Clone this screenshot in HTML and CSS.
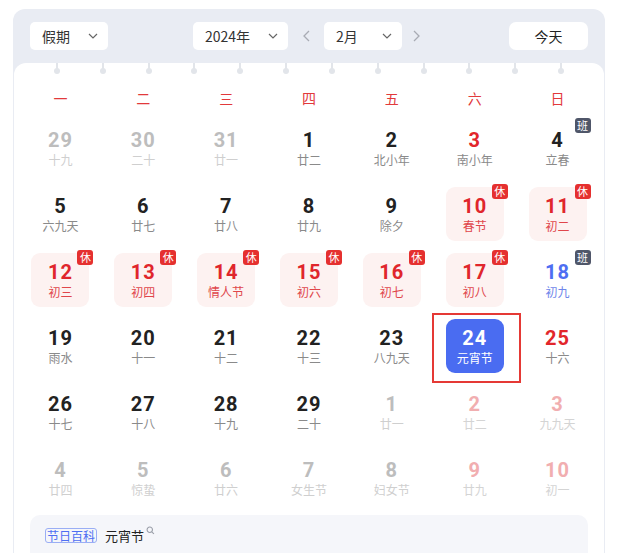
FILE: index.html
```html
<!DOCTYPE html>
<html lang="zh-CN">
<head>
<meta charset="utf-8">
<title>万年历</title>
<link rel="stylesheet" href="styles.css">
</head>
<body>
<div class="card">
  <div class="toolbar">
    <div class="select sel-holiday"><span>假期</span><svg class="chev" viewBox="0 0 10 6"><path d="M1 1L5 5L9 1"/></svg></div>
    <div class="center">
      <div class="select sel-year"><span>2024年</span><svg class="chev" viewBox="0 0 10 6"><path d="M1 1L5 5L9 1"/></svg></div>
      <svg class="arrow prev" viewBox="0 0 7 12"><path d="M6 1L1 6L6 11"/></svg>
      <div class="select sel-month"><span>2月</span><svg class="chev" viewBox="0 0 10 6"><path d="M1 1L5 5L9 1"/></svg></div>
      <svg class="arrow next" viewBox="0 0 7 12"><path d="M1 1L6 6L1 11"/></svg>
    </div>
    <div class="today">今天</div>
  </div>
  <div class="panel">
    <div class="rings">
      <i></i><i></i><i></i><i></i><i></i><i></i><i></i><i></i><i></i><i></i><i></i><i></i>
    </div>
    <div class="weekdays">
      <span>一</span><span>二</span><span>三</span><span>四</span><span>五</span><span>六</span><span>日</span>
    </div>
    <div class="grid">
      <div class="cell other"><div class="box"><b>29</b><small>十九</small></div></div>
      <div class="cell other"><div class="box"><b>30</b><small>二十</small></div></div>
      <div class="cell other"><div class="box"><b>31</b><small>廿一</small></div></div>
      <div class="cell"><div class="box"><b>1</b><small>廿二</small></div></div>
      <div class="cell"><div class="box"><b>2</b><small>北小年</small></div></div>
      <div class="cell weekend"><div class="box"><b>3</b><small>南小年</small></div></div>
      <div class="cell"><div class="box"><b>4</b><small>立春</small><em class="badge work">班</em></div></div>

      <div class="cell"><div class="box"><b>5</b><small>六九天</small></div></div>
      <div class="cell"><div class="box"><b>6</b><small>廿七</small></div></div>
      <div class="cell"><div class="box"><b>7</b><small>廿八</small></div></div>
      <div class="cell"><div class="box"><b>8</b><small>廿九</small></div></div>
      <div class="cell"><div class="box"><b>9</b><small>除夕</small></div></div>
      <div class="cell rest"><div class="box"><b>10</b><small>春节</small><em class="badge off">休</em></div></div>
      <div class="cell rest"><div class="box"><b>11</b><small>初二</small><em class="badge off">休</em></div></div>

      <div class="cell rest"><div class="box"><b>12</b><small>初三</small><em class="badge off">休</em></div></div>
      <div class="cell rest"><div class="box"><b>13</b><small>初四</small><em class="badge off">休</em></div></div>
      <div class="cell rest"><div class="box"><b>14</b><small>情人节</small><em class="badge off">休</em></div></div>
      <div class="cell rest"><div class="box"><b>15</b><small>初六</small><em class="badge off">休</em></div></div>
      <div class="cell rest"><div class="box"><b>16</b><small>初七</small><em class="badge off">休</em></div></div>
      <div class="cell rest"><div class="box"><b>17</b><small>初八</small><em class="badge off">休</em></div></div>
      <div class="cell workday"><div class="box"><b>18</b><small>初九</small><em class="badge work">班</em></div></div>

      <div class="cell"><div class="box"><b>19</b><small>雨水</small></div></div>
      <div class="cell"><div class="box"><b>20</b><small>十一</small></div></div>
      <div class="cell"><div class="box"><b>21</b><small>十二</small></div></div>
      <div class="cell"><div class="box"><b>22</b><small>十三</small></div></div>
      <div class="cell"><div class="box"><b>23</b><small>八九天</small></div></div>
      <div class="cell selected"><div class="box"><b>24</b><small>元宵节</small></div><span class="mark"></span></div>
      <div class="cell weekend"><div class="box"><b>25</b><small>十六</small></div></div>

      <div class="cell"><div class="box"><b>26</b><small>十七</small></div></div>
      <div class="cell"><div class="box"><b>27</b><small>十八</small></div></div>
      <div class="cell"><div class="box"><b>28</b><small>十九</small></div></div>
      <div class="cell"><div class="box"><b>29</b><small>二十</small></div></div>
      <div class="cell other"><div class="box"><b>1</b><small>廿一</small></div></div>
      <div class="cell other-red"><div class="box"><b>2</b><small>廿二</small></div></div>
      <div class="cell other-red"><div class="box"><b>3</b><small>九九天</small></div></div>

      <div class="cell other"><div class="box"><b>4</b><small>廿四</small></div></div>
      <div class="cell other"><div class="box"><b>5</b><small>惊蛰</small></div></div>
      <div class="cell other"><div class="box"><b>6</b><small>廿六</small></div></div>
      <div class="cell other"><div class="box"><b>7</b><small>女生节</small></div></div>
      <div class="cell other"><div class="box"><b>8</b><small>妇女节</small></div></div>
      <div class="cell other-red"><div class="box"><b>9</b><small>廿九</small></div></div>
      <div class="cell other-red"><div class="box"><b>10</b><small>初一</small></div></div>
    </div>
    <div class="info">
      <span class="tag">节日百科</span>
      <span class="fest">元宵节</span>
      <svg class="search" viewBox="0 0 10 10"><circle cx="4.2" cy="4.2" r="3"/><path d="M6.4 6.4L8.8 8.8"/></svg>
    </div>
  </div>
</div>
</body>
</html>
```

FILE: styles.css
```css
* { box-sizing: border-box; }
body {
  margin: 0;
  background: #fff;
  font-family: "Noto Sans CJK SC", "Noto Sans", sans-serif;
  overflow: hidden;
}
.card {
  margin: 9px 0 0 13px;
  width: 592px;
  background: #e9ecf3;
  border-radius: 12px 12px 0 0;
  padding: 0 1px;
}
.toolbar {
  height: 54px;
  padding: 13px 16px 0 16px;
  display: flex;
  justify-content: space-between;
  align-items: flex-start;
}
.select {
  height: 28px;
  background: #fff;
  border-radius: 5px;
  display: flex;
  align-items: center;
  justify-content: space-between;
  padding: 0 10px 0 12px;
  font-size: 14px;
  color: #333;
}
.sel-holiday { width: 78px; }
.sel-year { width: 95px; }
.sel-month { width: 78px; }
.chev {
  width: 10px;
  height: 6px;
  fill: none;
  stroke: #666;
  stroke-width: 1.2;
}
.center {
  display: flex;
  align-items: center;
}
.arrow {
  width: 7px;
  height: 12px;
  fill: none;
  stroke: #a8abb3;
  stroke-width: 1.3;
}
.arrow.prev { margin: 0 14px 0 15px; }
.arrow.next { margin: 0 4px 0 11px; }
.today {
  width: 79px;
  height: 28px;
  background: #fff;
  border-radius: 7px;
  font-size: 14px;
  color: #222;
  display: flex;
  align-items: center;
  justify-content: center;
}
.panel {
  background: #fff;
  border-radius: 12px 12px 0 0;
  padding: 0 5px;
  height: 490px;
}
.rings {
  height: 18px;
  display: flex;
  justify-content: space-between;
  padding: 0 35px;
}
.rings i {
  width: 6px;
  height: 11px;
}
.rings i::before {
  content: "";
  display: block;
  width: 2px;
  height: 6px;
  margin: 0 auto;
  background: #e2e5ea;
}
.rings i::after {
  content: "";
  display: block;
  width: 6px;
  height: 6px;
  margin-top: -1px;
  border-radius: 50%;
  background: #e2e5ea;
}
.weekdays {
  height: 34px;
  display: grid;
  grid-template-columns: repeat(7, 1fr);
  align-items: center;
  text-align: center;
  font-size: 14px;
  color: #e2393b;
}
.grid {
  display: grid;
  grid-template-columns: repeat(7, 1fr);
  grid-auto-rows: 66px;
}
.cell {
  position: relative;
  display: flex;
  align-items: center;
  justify-content: center;
}
.box {
  position: relative;
  width: 58px;
  height: 54px;
  border-radius: 9px;
  padding-top: 2px;
  display: flex;
  flex-direction: column;
  align-items: center;
  justify-content: center;
}
.box b {
  font-family: Roboto, "Liberation Sans", sans-serif;
  font-weight: 700;
  font-size: 20px;
  letter-spacing: 1px;
  line-height: 22px;
  color: #222;
}
.box small {
  font-size: 12px;
  line-height: 18px;
  color: #8a8a8a;
}
.cell.other b { color: #bdbdbd; }
.cell.other small { color: #cfcfcf; }
.cell.other-red b { color: #f1aeb0; }
.cell.other-red small { color: #d4d4d4; }
.cell.weekend b { color: #e2262b; }
.cell.rest .box { background: #fdf2f1; }
.cell.rest b { color: #e0262c; }
.cell.rest small { color: #e0464b; }
.cell.workday b { color: #4e6ef2; }
.cell.workday small { color: #6f86ea; }
.cell.selected .box { background: #4a6cf1; }
.cell.selected b, .cell.selected small { color: #fff; }
.badge {
  position: absolute;
  top: -3px;
  right: -4px;
  width: 16px;
  height: 15px;
  border-radius: 3px;
  font-style: normal;
  font-size: 11px;
  line-height: 15px;
  text-align: center;
  color: #fff;
}
.badge.off { background: #e5302f; }
.badge.work { background: #4f5669; }
.mark {
  position: absolute;
  left: -1px;
  top: 0;
  width: 89px;
  height: 70px;
  border: 2px solid #e53935;
}
.info {
  margin: 4px 11px 0 11px;
  height: 60px;
  background: #f5f6fa;
  border-radius: 10px;
  display: flex;
  align-items: flex-start;
  padding: 13px 0 0 15px;
}
.tag {
  font-size: 12px;
  line-height: 13px;
  color: #4e6ef2;
  border: 1px solid #9aaef5;
  border-radius: 3px;
  padding: 0 1px;
}
.fest {
  font-size: 13px;
  line-height: 15px;
  color: #222;
  margin-left: 8px;
}
.search {
  width: 9px;
  height: 9px;
  fill: none;
  stroke: #9a9ea8;
  stroke-width: 1.2;
  margin: -2px 0 0 2px;
}
```
